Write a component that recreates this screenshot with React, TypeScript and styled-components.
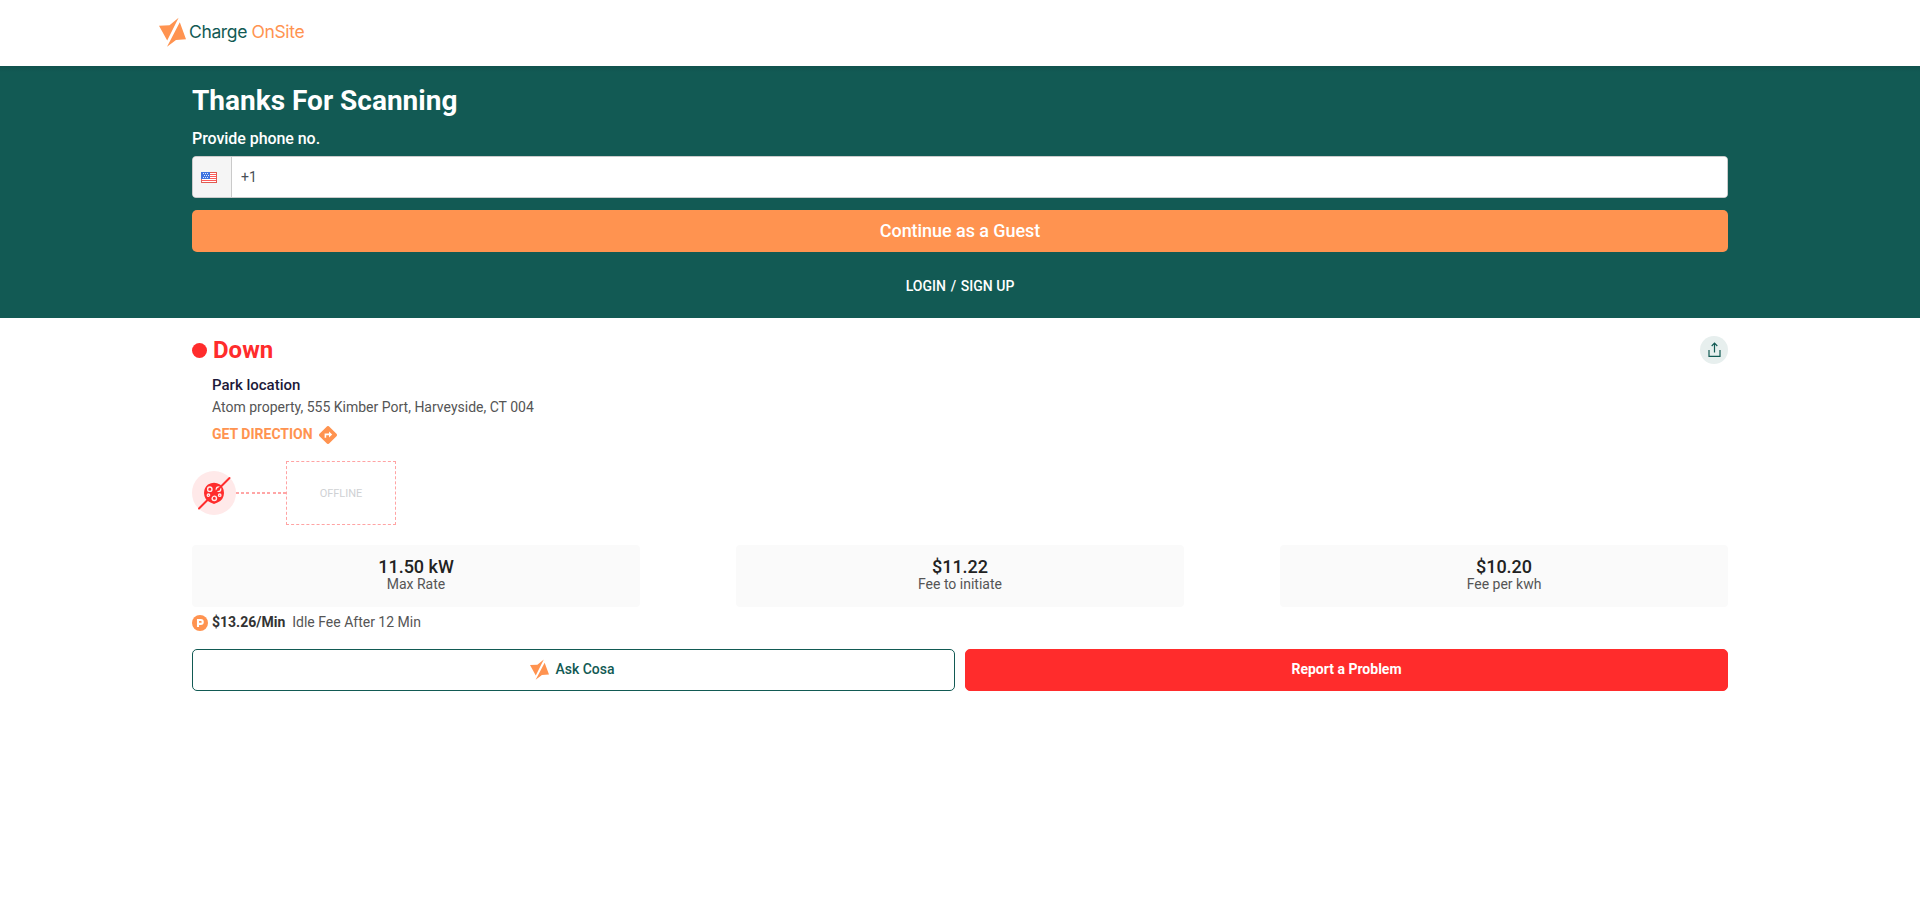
import React from "react";
import styled, { createGlobalStyle } from "styled-components";

const GlobalStyle = createGlobalStyle`
  *, *::before, *::after { box-sizing: border-box; }
  body { margin: 0; background: #fff; font-family: Roboto, "Liberation Sans", sans-serif; color: #222; }
  h1, h2, p { margin: 0; }
  button, input { font-family: inherit; }
`;

const Header = styled.header`
  height: 66px;
  padding: 17px 0 0 159px;
  display: flex;
  align-items: flex-start;
  gap: 3px;
  background: #fff;
`;
const Brand = styled.span`
  font: 400 17.5px/29px Inter, sans-serif;
  letter-spacing: -0.37px;
  color: #125a54;
  white-space: pre;
`;
const BrandAccent = styled.span`
  color: #ff9350;
`;
const Container = styled.div`
  width: 80%;
  margin: 0 auto;
`;
const Hero = styled.section`
  height: 252px;
  background: linear-gradient(#11524d, #125a54 6px);
  color: #fff;
`;
const Title = styled.h1`
  padding-top: 16px;
  font-size: 28px;
  line-height: 37px;
  font-weight: 700;
`;
const FieldLabel = styled.label`
  display: block;
  margin-top: 10px;
  font-size: 16px;
  line-height: 20px;
  font-weight: 500;
  letter-spacing: -0.06px;
`;
const PhoneField = styled.div`
  display: flex;
  height: 42px;
  margin-top: 7px;
  border: 1px solid #cacaca;
  border-radius: 4px;
  background: #fff;
  overflow: hidden;
`;
const CountryBox = styled.div`
  width: 39px;
  padding-left: 8px;
  display: flex;
  align-items: center;
  background: #f5f5f5;
  border-right: 1px solid #cacaca;
`;
const PhoneInput = styled.input`
  flex: 1;
  border: 0;
  padding: 0 9px;
  outline: none;
  font-size: 14px;
  color: #495057;
`;
const GuestButton = styled.button`
  display: block;
  width: 100%;
  height: 42px;
  margin-top: 12px;
  padding: 0 0 2px;
  border: 0;
  border-radius: 5px;
  background: #ff9350;
  color: #fff;
  font-size: 18px;
  font-weight: 500;
  letter-spacing: -0.06px;
`;
const Login = styled.p`
  margin-top: 25px;
  text-align: center;
  font-size: 14px;
  line-height: 18px;
  font-weight: 500;
`;
const Slash = styled.span`
  margin: 0 1.3px;
`;
const StatusRow = styled.div`
  display: flex;
  align-items: center;
  height: 28px;
  margin-top: 18px;
`;
const StatusDot = styled.span`
  width: 15px;
  height: 15px;
  border-radius: 50%;
  background: #ff2c2c;
  margin: 0 6px 0 0;
`;
const StatusText = styled.h2`
  font-size: 24px;
  line-height: 28px;
  font-weight: 700;
  color: #ff2c2c;
`;
const ShareButton = styled.button`
  margin-left: auto;
  width: 28px;
  height: 28px;
  padding: 0;
  border: 0;
  border-radius: 50%;
  background: #e7efee;
  display: grid;
  place-items: center;
`;
const Location = styled.div`
  padding-left: 20px;
`;
const Place = styled.p`
  margin-top: 11px;
  font-size: 15px;
  line-height: 20px;
  font-weight: 500;
  color: #1c1939;
`;
const Address = styled.p`
  margin-top: 3px;
  font-size: 14px;
  line-height: 18px;
  color: #555;
`;
const Direction = styled.a`
  display: flex;
  align-items: flex-start;
  gap: 6px;
  margin-top: 10px;
  height: 18px;
  font-size: 14px;
  line-height: 16px;
  font-weight: 700;
  color: #ff9350;
`;
const Connector = styled.div`
  display: flex;
  align-items: center;
  margin-top: 17px;
  height: 64px;
`;
const Plug = styled.span`
  display: block;
  width: 44px;
  height: 44px;
  border-radius: 50%;
  background: #ffe9e9;
`;
const Cable = styled.span`
  width: 50px;
  height: 2px;
  background: repeating-linear-gradient(90deg, #ffa6a6 0 3px, transparent 3px 5.22px);
`;
const Vehicle = styled.div`
  width: 110px;
  height: 64px;
  border: 1px dashed #ffa3a3;
  display: grid;
  place-items: center;
  font-size: 11px;
  color: #cfd1d4;
`;
const Rates = styled.div`
  display: flex;
  justify-content: space-between;
  margin-top: 20px;
`;
const RateCard = styled.div`
  width: 448px;
  height: 62px;
  padding-top: 12px;
  border-radius: 4px;
  background: #fafafa;
  text-align: center;
`;
const RateValue = styled.p`
  font-size: 18px;
  line-height: 20px;
  font-weight: 500;
  color: #222;
`;
const RateLabel = styled.p`
  margin-top: -1px;
  font-size: 14px;
  line-height: 16px;
  color: #555;
`;
const IdleFee = styled.div`
  display: flex;
  align-items: flex-start;
  height: 16px;
  margin-top: 8px;
  font-size: 14px;
  line-height: 15px;
  color: #555;
`;
const ParkingBadge = styled.svg`
  margin-right: 4px;
`;
const IdleAmount = styled.strong`
  margin-right: 7px;
  font-weight: 700;
  color: #333;
`;
const Actions = styled.div`
  display: grid;
  grid-template-columns: 1fr 1fr;
  gap: 10px;
  margin-top: 18px;
`;
const ActionButton = styled.button<{ $danger?: boolean }>`
  display: flex;
  align-items: center;
  justify-content: center;
  gap: 6px;
  height: 42px;
  padding: ${(p) => (p.$danger ? "0 0 2px" : "0 2px 2px 0")};
  border: 1px solid ${(p) => (p.$danger ? "#ff2c2c" : "#125a54")};
  border-radius: 5px;
  background: ${(p) => (p.$danger ? "#ff2c2c" : "#fff")};
  color: ${(p) => (p.$danger ? "#fff" : "#125a54")};
  font-size: 14px;
  font-weight: ${(p) => (p.$danger ? 700 : 500)};
`;

const Bolt = ({ width, height }: { width: number; height: number }) => (
  <svg width={width} height={height} viewBox="0 0 27 30" preserveAspectRatio="none" fill="#ff9350">
    <path d="M0 8.700 10.500 8.300 19.600 .800 8.200 23.500Z" />
    <path d="M20.800 5.300 27 22.200 17 22.900 8 29.800Z" />
  </svg>
);

const Flag = () => (
  <svg width="16" height="11" viewBox="0 0 16 11" shapeRendering="crispEdges">
    <rect width="16" height="11" fill="#fff" />
    {[0, 2, 4, 6, 8, 10].map((y) => (
      <rect key={y} y={y} width="16" height="1" fill={y === 0 || y === 10 ? "#e25a50" : "#ff5a5a"} />
    ))}
    <rect x="0" width="1" height="11" fill="#d9695f" />
    <rect x="15" width="1" height="11" fill="#e25a50" />
    <rect width="9" height="7" fill="#3f74e0" />
    {[[2, 1], [4, 1], [6, 1], [3, 3], [5, 3], [7, 3], [2, 5], [4, 5], [6, 5]].map(([x, y]) => (
      <rect key={`${x}-${y}`} x={x} y={y} width="1" height="1" fill="#dce8ff" />
    ))}
  </svg>
);

const rates = [
  ["11.50 kW", "Max Rate"],
  ["$11.22", "Fee to initiate"],
  ["$10.20", "Fee per kwh"],
];

export default function App() {
  return (
    <>
      <GlobalStyle />
      <Header>
        <Bolt width={27} height={30} />
        <Brand>
          Charge <BrandAccent>OnSite</BrandAccent>
        </Brand>
      </Header>
      <Hero>
        <Container>
          <Title>Thanks For Scanning</Title>
          <FieldLabel htmlFor="phone">Provide phone no.</FieldLabel>
          <PhoneField>
            <CountryBox>
              <Flag />
            </CountryBox>
            <PhoneInput id="phone" defaultValue="+1" />
          </PhoneField>
          <GuestButton>Continue as a Guest</GuestButton>
          <Login>
            LOGIN <Slash>/</Slash> SIGN UP
          </Login>
        </Container>
      </Hero>
      <Container as="main">
        <StatusRow>
          <StatusDot />
          <StatusText>Down</StatusText>
          <ShareButton aria-label="Share">
            <svg width="14" height="16" viewBox="0 0 14 16" fill="none" stroke="#125a54" strokeWidth="1.2">
              <path d="M2 8v6.400h11V8" />
              <path d="M7.500 10.500V1.400M4.700 4l2.800-2.800L10.300 4" />
            </svg>
          </ShareButton>
        </StatusRow>
        <Location>
          <Place>Park location</Place>
          <Address>Atom property, 555 Kimber Port, Harveyside, CT 004</Address>
          <Direction>
            GET DIRECTION
            <svg width="18" height="18" viewBox="0 0 18 18">
              <rect x="2.200" y="2.200" width="13.600" height="13.600" rx="1.600" transform="rotate(45 9 9)" fill="#ff9350" />
              <path d="M6.400 11.800V8.400h5" fill="none" stroke="#fff" strokeWidth="1.600" />
              <path d="M10 5.400 13.200 8.400 10 11.400Z" fill="#fff" />
            </svg>
          </Direction>
        </Location>
        <Connector>
          <Plug>
            <svg width="44" height="44" viewBox="0 0 44 44">
              <path d="M16 13.500Q22 9.800 28 13.500Q32 16.500 32 22Q31.800 29 25.500 31.500L22 33L18.500 31.500Q12.200 29 12 22Q12 16.500 16 13.500Z" fill="#ff2c2c" />
              <g fill="none" stroke="#ffe9e9" strokeWidth="1.400">
                <circle cx="17.800" cy="18.200" r="2.200" />
                <circle cx="26.500" cy="18.200" r="2.200" />
                <circle cx="22.300" cy="27.300" r="2.200" />
                <circle cx="16.500" cy="24.200" r="1.200" />
                <circle cx="27.700" cy="24.200" r="1.200" />
              </g>
              <path d="M7 37.500 37.500 7" stroke="#ff2c2c" strokeWidth="2" strokeLinecap="round" />
            </svg>
          </Plug>
          <Cable />
          <Vehicle>OFFLINE</Vehicle>
        </Connector>
        <Rates>
          {rates.map(([value, label]) => (
            <RateCard key={label}>
              <RateValue>{value}</RateValue>
              <RateLabel>{label}</RateLabel>
            </RateCard>
          ))}
        </Rates>
        <IdleFee>
          <ParkingBadge width="16" height="16" viewBox="0 0 16 16">
            <circle cx="8" cy="8" r="8" fill="#ff9350" />
            <path d="M6 12V5h2.800a1.900 1.900 0 0 1 0 3.900H6" fill="none" stroke="#fff" strokeWidth="2.100" />
          </ParkingBadge>
          <IdleAmount>$13.26/Min</IdleAmount>
          Idle Fee After 12 Min
        </IdleFee>
        <Actions>
          <ActionButton>
            <Bolt width={19} height={21} />
            Ask Cosa
          </ActionButton>
          <ActionButton $danger>Report a Problem</ActionButton>
        </Actions>
      </Container>
    </>
  );
}
